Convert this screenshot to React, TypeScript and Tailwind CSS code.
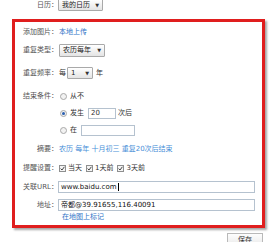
import React from 'react';

const Select = ({ label, w }: { label: string; w: string }) => (
  <div
    className={`${w} h-[12px] flex items-center justify-between border border-[#a9a9a9] rounded-[1px] bg-gradient-to-b from-[#ffffff] to-[#e4e4e4] pl-[3px] pr-[3px] text-[#222]`}
  >
    <span>{label}</span>
    <span className="text-[5px] text-[#333]">▼</span>
  </div>
);

const Radio = ({ on }: { on?: boolean }) => (
  <span className="w-[7px] h-[7px] rounded-full border border-[#a8a8a8] bg-[#f2f2f2] flex items-center justify-center mr-[3px]">
    {on && <span className="w-[3px] h-[3px] rounded-full bg-[#2a5fb0]" />}
  </span>
);

const Check = () => (
  <span className="w-[7px] h-[7px] border border-[#8e8f8f] bg-[#f4f4f4] flex items-center justify-center mr-[2px]">
    <svg width="5" height="5" viewBox="0 0 5 5">
      <path d="M0.6 2.6 L2 4 L4.4 0.8" fill="none" stroke="#333" strokeWidth="0.9" />
    </svg>
  </span>
);

const Row = ({
  label,
  children,
  className = '',
}: {
  label?: string;
  children: React.ReactNode;
  className?: string;
}) => (
  <div className={`flex items-center h-[14px] ${className}`}>
    <div className="w-[43px] shrink-0 text-right text-[#555]">{label}</div>
    <div className="flex items-center">{children}</div>
  </div>
);

export default function App() {
  return (
    <div
      className="w-[277px] h-[242px] overflow-hidden bg-white text-[7px] leading-none text-[#333]"
      style={{ fontFamily: '"DejaVu Sans", "Noto Sans CJK SC", sans-serif' }}
    >
      <div className="flex items-center h-[14px] -mt-[2px]">
        <div className="w-[58px] shrink-0 text-right text-[#555]">日历：</div>
        <Select label="我的日历" w="w-[45px]" />
      </div>

      <div className="ml-[12px] mt-[7px] w-[253px] border-[3px] border-[#e01e1e] shadow-[2px_2px_2px_rgba(0,0,0,0.35)] pt-[3px] pb-[3px]">
        <Row label="添加图片：">
          <span className="text-[#2f73c7] pl-[1px]">本地上传</span>
        </Row>
        <Row label="重复类型：" className="mt-[4px]">
          <Select label="农历每年" w="w-[46px] ml-[1px] h-[13px]" />
        </Row>
        <Row label="重复频率：" className="mt-[9px]">
          <span className="pl-[1px] mr-[1px]">每</span>
          <Select label="1" w="w-[26px]" />
          <span className="ml-[3px]">年</span>
        </Row>
        <Row label="结束条件：" className="mt-[9px]">
          <span className="pl-[2px] flex items-center">
            <Radio />
            从不
          </span>
        </Row>
        <Row className="mt-[3px]">
          <span className="pl-[2px] flex items-center">
            <Radio on />
            发生
            <span className="ml-[4px] w-[28px] h-[11px] border border-[#b5c2cf] flex items-center pl-[2px]">20</span>
            <span className="ml-[2px]">次后</span>
          </span>
        </Row>
        <Row className="mt-[3px]">
          <span className="pl-[2px] flex items-center">
            <Radio />
            在
            <span className="ml-[4px] w-[54px] h-[11px] border border-[#b5c2cf]" />
          </span>
        </Row>
        <Row label="摘要：" className="mt-[5px]">
          <span className="text-[#4a8fd8] pl-[1px] whitespace-pre">农历 每年 十月初三 重复20次后结束</span>
        </Row>
        <Row label="提醒设置：" className="mt-[5px]">
          <span className="pl-[1px] flex items-center">
            <Check />
            当天
            <span className="ml-[4px] flex items-center">
              <Check />
              1天前
            </span>
            <span className="ml-[4px] flex items-center">
              <Check />
              3天前
            </span>
          </span>
        </Row>
        <Row label="关联URL：" className="mt-[5px]">
          <span className="w-[197px] h-[12px] border border-[#b5c2cf] flex items-center pl-[2px] text-[#111]">
            www.baidu.com
            <span className="w-[1px] h-[8px] bg-black ml-[1px]" />
          </span>
        </Row>
        <Row label="地址：" className="mt-[4px]">
          <span className="w-[197px] h-[12px] border border-[#b5c2cf] flex items-center pl-[2px] text-[#111]">
            帝都@39.91655,116.40091
          </span>
        </Row>
        <div className="flex items-center h-[10px]">
          <div className="w-[47px] shrink-0" />
          <span className="text-[#2f73c7]">在地图上标记</span>
        </div>
      </div>

      <div className="flex justify-end mt-[5px] pr-[14px]">
        <div className="w-[36px] h-[14px] border border-[#b9b9b9] bg-gradient-to-b from-[#fdfdfd] to-[#e9e9e9] flex items-center justify-center text-[#333]">
          保存
        </div>
      </div>
    </div>
  );
}
